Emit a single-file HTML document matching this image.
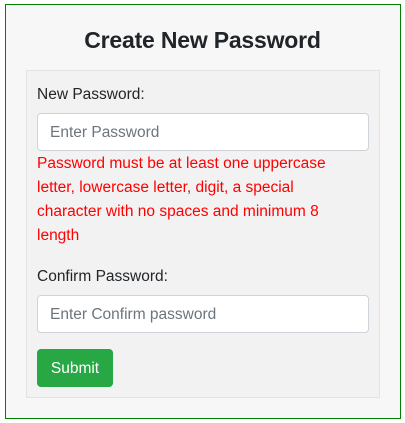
<!DOCTYPE html>
<html><head><style>
*{box-sizing:border-box;margin:0;padding:0}
body{width:405px;height:423px;background:#fff;font-family:"Liberation Sans",sans-serif;position:relative;overflow:hidden}
.outer{position:absolute;left:5px;top:4px;width:396px;height:415px;border:1px solid #008000;background:#f7f7f7}
h1{position:absolute;left:0;right:0;top:27px;text-align:center;font-size:23px;font-weight:bold;color:#212529;letter-spacing:-0.2px}
.panel{position:absolute;left:26px;top:70px;width:354px;height:328px;border:1px solid #e3e3e3;background:#f2f2f2}
.lbl{position:absolute;left:37px;font-size:15.5px;color:#212529}
.inp{position:absolute;left:37px;width:332px;height:38px;background:#fff;border:1px solid #ced4da;border-radius:4px;font-size:15.5px;color:#6c757d;padding:10px 12px}
.err{position:absolute;left:37px;top:152px;font-size:15.5px;line-height:24px;color:#ff0000;white-space:nowrap}
.btn{position:absolute;left:37px;top:349px;width:76px;height:38px;background:#28a745;border-radius:4px;color:#fff;font-size:15.5px;text-align:center;line-height:39px}
</style></head><body>
<div class="outer"></div>
<h1>Create New Password</h1>
<div class="panel"></div>
<div class="lbl" style="top:86px">New Password:</div>
<div class="inp" style="top:113px">Enter Password</div>
<div class="err">Password must be at least one uppercase<br>letter, lowercase letter, digit, a special<br>character with no spaces and minimum 8<br>length</div>
<div class="lbl" style="top:268px">Confirm Password:</div>
<div class="inp" style="top:295px">Enter Confirm password</div>
<div class="btn">Submit</div>
</body></html>
